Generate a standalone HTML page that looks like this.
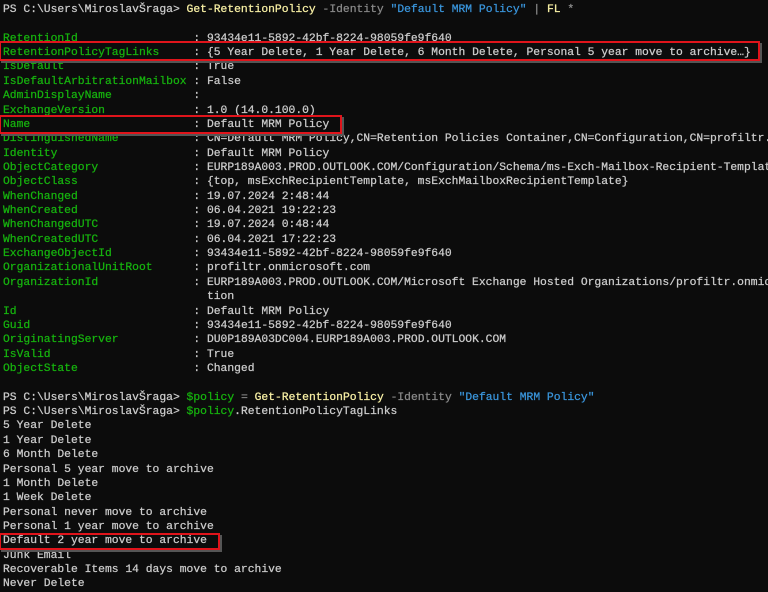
<!DOCTYPE html>
<html><head><meta charset="utf-8"><style>
html,body{margin:0;padding:0;background:#0c0c0c;width:768px;height:592px;overflow:hidden}
pre{position:absolute;left:3px;top:3px;margin:0;font-family:"Liberation Mono","DejaVu Sans Mono",monospace;font-size:11.33px;line-height:14.36px;color:#cccccc;white-space:pre;-webkit-text-stroke:0.25px}
.g{color:#16b30e}.y{color:#f9f1a5}.p{color:#8a8a8a}.s{color:#3a96dd}
.box{position:absolute;border:2px solid #e0141b;box-shadow:2px 2px 0 #555;}
</style></head><body>
<pre>PS C:\Users\MiroslavŠraga&gt; <span class="y">Get-RetentionPolicy</span> <span class="p">-Identity</span> <span class="s">"Default MRM Policy"</span> <span class="p">|</span> <span class="y">FL</span> <span class="p">*</span>

<span class="g">RetentionId</span>                 : 93434e11-5892-42bf-8224-98059fe9f640
<span class="g">RetentionPolicyTagLinks</span>     : {5 Year Delete, 1 Year Delete, 6 Month Delete, Personal 5 year move to archive…}
<span class="g">IsDefault</span>                   : True
<span class="g">IsDefaultArbitrationMailbox</span> : False
<span class="g">AdminDisplayName</span>            :
<span class="g">ExchangeVersion</span>             : 1.0 (14.0.100.0)
<span class="g">Name</span>                        : Default MRM Policy
<span class="g">DistinguishedName</span>           : CN=Default MRM Policy,CN=Retention Policies Container,CN=Configuration,CN=profiltr.
<span class="g">Identity</span>                    : Default MRM Policy
<span class="g">ObjectCategory</span>              : EURP189A003.PROD.OUTLOOK.COM/Configuration/Schema/ms-Exch-Mailbox-Recipient-Template
<span class="g">ObjectClass</span>                 : {top, msExchRecipientTemplate, msExchMailboxRecipientTemplate}
<span class="g">WhenChanged</span>                 : 19.07.2024 2:48:44
<span class="g">WhenCreated</span>                 : 06.04.2021 19:22:23
<span class="g">WhenChangedUTC</span>              : 19.07.2024 0:48:44
<span class="g">WhenCreatedUTC</span>              : 06.04.2021 17:22:23
<span class="g">ExchangeObjectId</span>            : 93434e11-5892-42bf-8224-98059fe9f640
<span class="g">OrganizationalUnitRoot</span>      : profiltr.onmicrosoft.com
<span class="g">OrganizationId</span>              : EURP189A003.PROD.OUTLOOK.COM/Microsoft Exchange Hosted Organizations/profiltr.onmic
                              tion
<span class="g">Id</span>                          : Default MRM Policy
<span class="g">Guid</span>                        : 93434e11-5892-42bf-8224-98059fe9f640
<span class="g">OriginatingServer</span>           : DU0P189A03DC004.EURP189A003.PROD.OUTLOOK.COM
<span class="g">IsValid</span>                     : True
<span class="g">ObjectState</span>                 : Changed

PS C:\Users\MiroslavŠraga&gt; <span class="g">$policy</span> <span class="p">=</span> <span class="y">Get-RetentionPolicy</span> <span class="p">-Identity</span> <span class="s">"Default MRM Policy"</span>
PS C:\Users\MiroslavŠraga&gt; <span class="g">$policy</span>.RetentionPolicyTagLinks
5 Year Delete
1 Year Delete
6 Month Delete
Personal 5 year move to archive
1 Month Delete
1 Week Delete
Personal never move to archive
Personal 1 year move to archive
Default 2 year move to archive
Junk Email
Recoverable Items 14 days move to archive
Never Delete
</pre>
<div class="box" style="left:-1px;top:41px;width:757px;height:16px"></div>
<div class="box" style="left:-1px;top:115px;width:339px;height:15px"></div>
<div class="box" style="left:-1px;top:533px;width:217px;height:13px"></div>
</body></html>
